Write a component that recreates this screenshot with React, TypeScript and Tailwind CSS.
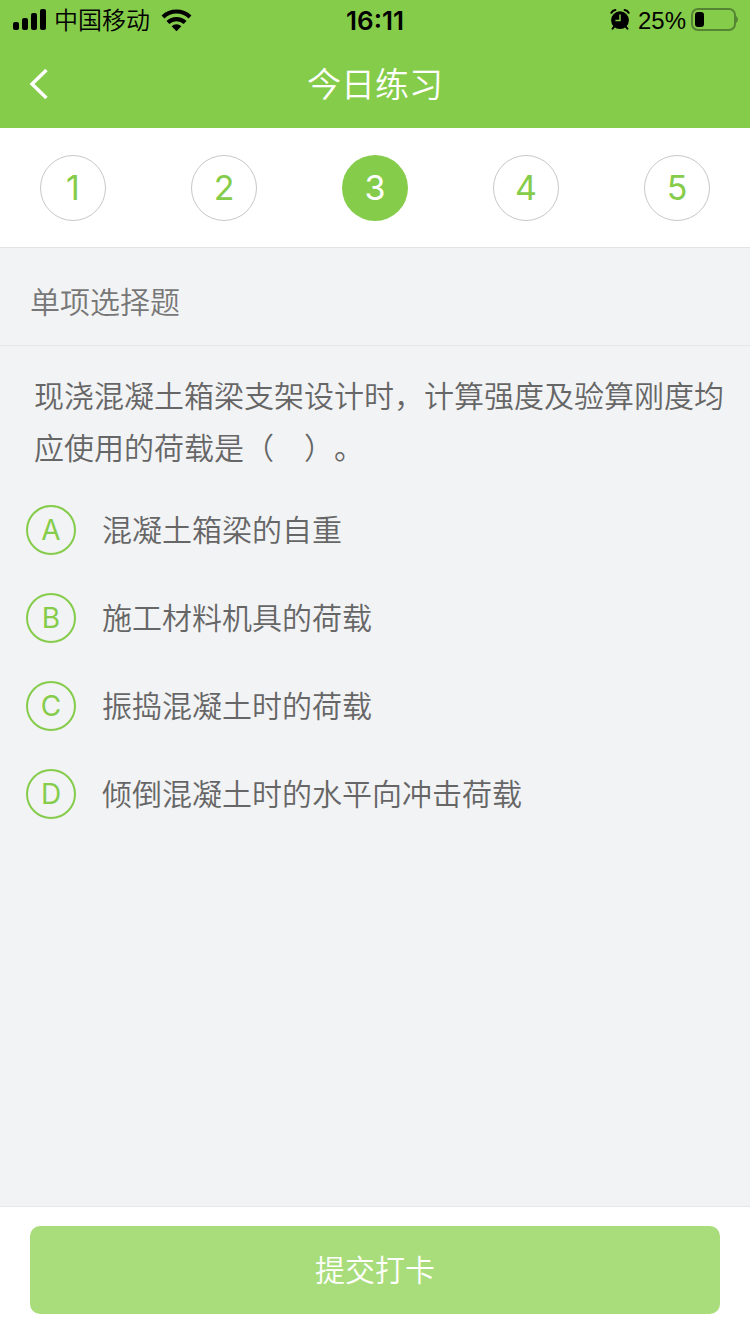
import React, { useState } from "react";

const steps = [1, 2, 3, 4, 5];

const question = "现浇混凝土箱梁支架设计时，计算强度及验算刚度均应使用的荷载是（　）。";

const options = [
  { key: "A", text: "混凝土箱梁的自重" },
  { key: "B", text: "施工材料机具的荷载" },
  { key: "C", text: "振捣混凝土时的荷载" },
  { key: "D", text: "倾倒混凝土时的水平向冲击荷载" },
];

const StatusBar = () => (
  <div className="grid h-10 grid-cols-3 items-center px-3 pt-0.5 text-2xl text-black">
    <div className="flex items-center gap-2">
      <svg width="34" height="24" viewBox="0 0 34 24" aria-hidden="true">
        <rect x="1" y="13" width="6" height="8" rx="2" />
        <rect x="10" y="9" width="6" height="12" rx="2" />
        <rect x="19" y="4" width="6" height="17" rx="2" />
        <rect x="28" y="0" width="6" height="21" rx="2" />
      </svg>
      <span className="font-[350] whitespace-nowrap">中国移动</span>
      <svg width="36" height="26" viewBox="0 0 36 26" aria-hidden="true">
        <g fill="none" stroke="#000" strokeWidth="4.2">
          <path d="M5 8.9a19.6 19.6 0 0 1 27 0" />
          <path d="M9.9 14.5a12.4 12.4 0 0 1 17.2 0" />
        </g>
        <path d="M18.5 23.2l-4.9-5a7.2 7.2 0 0 1 9.8 0z" />
      </svg>
    </div>
    <span className="text-center text-[26px] leading-8 font-semibold">16:11</span>
    <div className="flex items-center justify-end gap-2">
      <svg width="20" height="24" viewBox="0 0 20 24" aria-hidden="true">
        <circle cx="10" cy="11.2" r="8.9" />
        <path
          d="M1.4 3.8Q2.6 1.4 5.4 1M18.6 3.8Q17.4 1.4 14.6 1M4.2 17.6l-1.6 2M15.8 17.6l1.6 2"
          fill="none"
          stroke="#000"
          strokeWidth="2"
          strokeLinecap="round"
        />
        <path d="M10 5.4v6.2H5.4" fill="none" stroke="#86cc4b" strokeWidth="1.5" />
      </svg>
      <div className="flex items-center gap-1">
        <span className="font-['Liberation_Sans','Noto_Sans_CJK_SC',sans-serif]">25%</span>
        <svg width="48" height="26" viewBox="0 0 48 26" aria-hidden="true">
          <rect x="2" y="1" width="43" height="21" rx="6" fill="none" stroke="#558432" strokeWidth="2" />
          <rect x="5" y="4" width="9" height="15" rx="3" />
          <path d="M46 8c2.6 1.4 2.6 5.6 0 7z" fill="#558432" />
        </svg>
      </div>
    </div>
  </div>
);

const App = () => {
  const [current, setCurrent] = useState(3);
  const [answer, setAnswer] = useState("");

  return (
    <div className="flex min-h-screen flex-col bg-[#f2f3f5] font-['Inter','Noto_Sans_CJK_SC',sans-serif] text-[#666666]">
      <header className="bg-[#86cc4b]">
        <StatusBar />
        <div className="grid h-22 grid-cols-[1fr_auto_1fr] items-center px-7 text-white">
          <button type="button" aria-label="返回" className="justify-self-start">
            <svg width="22" height="32" viewBox="0 0 22 32" fill="none" aria-hidden="true">
              <path d="M18.5 2L4 16l14.5 14" stroke="#fff" strokeWidth="3.4" />
            </svg>
          </button>
          <h1 className="text-[34px] font-[350]">今日练习</h1>
        </div>
      </header>

      <nav className="flex h-30 items-center justify-between border-b border-[#e3e3e3] bg-white px-10">
        {steps.map((step) => (
          <button
            key={step}
            type="button"
            onClick={() => setCurrent(step)}
            className={
              step === current
                ? "size-[66px] rounded-full bg-[#86cc4b] text-[34px] text-white"
                : "size-[66px] rounded-full border border-[#c8c8c8] text-[34px] text-[#86cc4b]"
            }
          >
            {step}
          </button>
        ))}
      </nav>

      <main className="flex-1">
        <h2 className="border-b border-[#e6e7e9] px-[30px] pt-8 pb-5 text-[30px] leading-[45px] font-[350] text-[#777777]">
          单项选择题
        </h2>
        <fieldset aria-labelledby="question" className="pt-6 text-[30px] font-[350]">
          <p id="question" className="pr-6 pl-[34px] leading-[52px] [text-spacing-trim:space-all]">
            {question}
          </p>
          <div className="flex flex-col gap-[38px] px-[26px] pt-[31px] pb-8">
            {options.map((option) => (
              <label key={option.key} className="flex cursor-pointer items-center">
                <input
                  type="radio"
                  name="answer"
                  value={option.key}
                  checked={answer === option.key}
                  onChange={() => setAnswer(option.key)}
                  className="peer sr-only"
                />
                <span className="flex size-[50px] shrink-0 items-center justify-center rounded-full border-2 border-[#86cc4b] text-[28px] font-normal text-[#86cc4b] peer-checked:bg-[#86cc4b] peer-checked:text-white">
                  {option.key}
                </span>
                <span className="pl-[26px] leading-[50px]">{option.text}</span>
              </label>
            ))}
          </div>
        </fieldset>
      </main>

      <footer className="border-t border-[#e6e7e9] bg-white px-[30px] pt-[19px] pb-5">
        <button type="button" className="h-22 w-full rounded-[10px] bg-[#a9dd7b] text-[30px] font-[350] text-white">
          提交打卡
        </button>
      </footer>
    </div>
  );
};

export default App;
